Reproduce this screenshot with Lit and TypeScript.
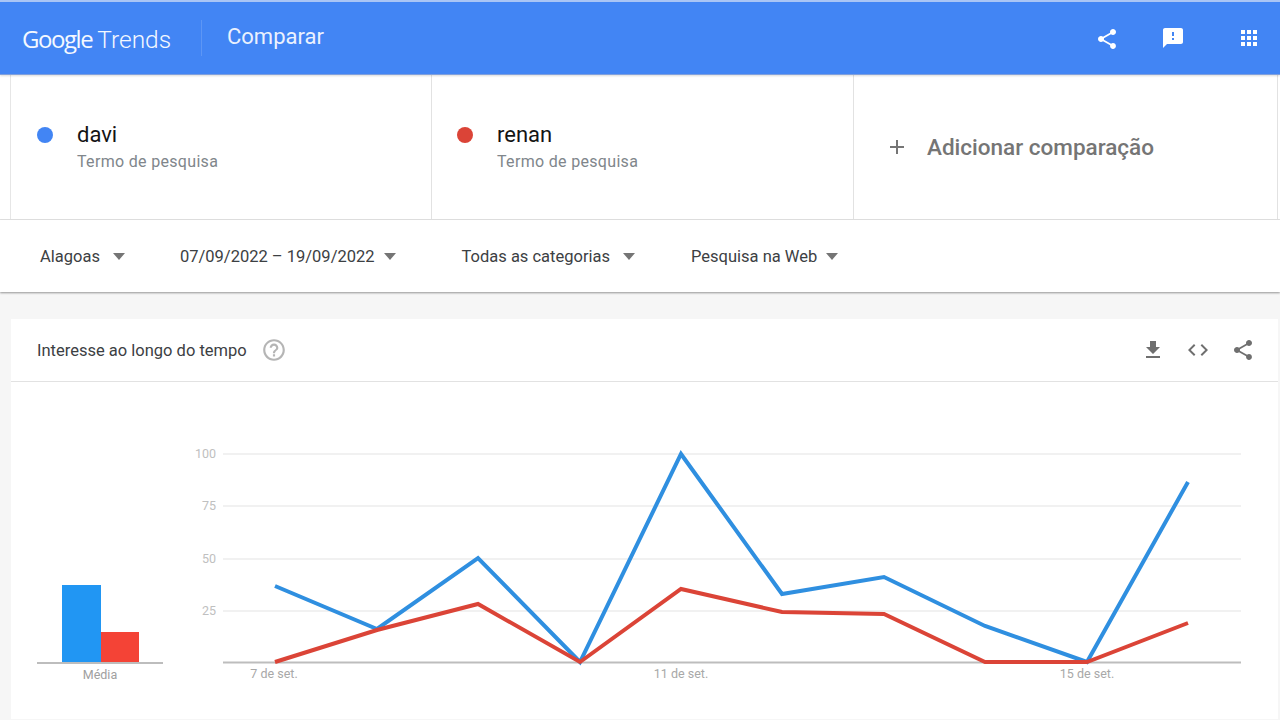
import { LitElement, html, css, svg } from "lit";
import { customElement } from "lit/decorators.js";

const ICONS = {
  share: "M18 16.08c-.76 0-1.44.3-1.96.77L8.91 12.7c.05-.23.09-.46.09-.7s-.04-.47-.09-.7l7.05-4.11c.54.5 1.25.81 2.04.81 1.66 0 3-1.34 3-3s-1.34-3-3-3-3 1.34-3 3c0 .24.04.47.09.7L8.04 9.81C7.5 9.31 6.79 9 6 9c-1.66 0-3 1.34-3 3s1.34 3 3 3c.79 0 1.5-.31 2.04-.81l7.12 4.16c-.05.21-.08.43-.08.65 0 1.61 1.31 2.92 2.92 2.92 1.61 0 2.92-1.31 2.92-2.92s-1.31-2.92-2.92-2.92z",
  feedback: "M20 2H4c-1.1 0-1.99.9-1.99 2L2 22l4-4h14c1.1 0 2-.9 2-2V4c0-1.1-.9-2-2-2zm-7 12h-2v-2h2v2zm0-4h-2V6h2v4z",
  apps: "M4 8h4V4H4v4zm6 12h4v-4h-4v4zm-6 0h4v-4H4v4zm0-6h4v-4H4v4zm6 0h4v-4h-4v4zm6-10v4h4V4h-4zm-6 4h4V4h-4v4zm6 6h4v-4h-4v4zm0 6h4v-4h-4v4z",
  download: "M19 9h-4V3H9v6H5l7 7 7-7zM5 18v2h14v-2H5z",
  code: "M9.4 16.6L4.8 12l4.6-4.6L8 6l-6 6 6 6 1.4-1.4zm5.2 0l4.6-4.6-4.6-4.6L16 6l6 6-6 6-1.4-1.4z",
  help: "M11 18h2v-2h-2v2zm1-16C6.48 2 2 6.48 2 12s4.48 10 10 10 10-4.48 10-10S17.52 2 12 2zm0 18c-4.41 0-8-3.59-8-8s3.59-8 8-8 8 3.59 8 8-3.59 8-8 8zm0-14c-2.21 0-4 1.79-4 4h2c0-1.1.9-2 2-2s2 .9 2 2c0 2-3 1.75-3 5h2c0-2.25 3-2.5 3-5 0-2.21-1.79-4-4-4z",
};
type IconName = keyof typeof ICONS;
const icon = (n: IconName, cls = "") =>
  html`<svg class="icon ${cls}" viewBox="0 0 24 24"><path d=${ICONS[n]}></path></svg>`;

const XS = [275, 377, 478, 580, 681, 782, 884, 985, 1087, 1188];
const BLUE = [587, 630, 559, 663, 455, 595, 578, 627, 663, 483];
const RED = [663, 631, 605, 663, 590, 613, 615, 663, 663, 624];
const points = (ys: number[]) => ys.map((y, i) => `${XS[i]},${y}`).join(" ");
const GRID = [
  { y: 455, label: "100" },
  { y: 507, label: "75" },
  { y: 560, label: "50" },
  { y: 612, label: "25" },
];
const XLABELS = [
  { x: 274, label: "7 de set." },
  { x: 681, label: "11 de set." },
  { x: 1087, label: "15 de set." },
];
const FILTERS = [
  { label: "Alagoas", cls: "f1" },
  { label: "07/09/2022 – 19/09/2022", cls: "f2" },
  { label: "Todas as categorias", cls: "f3" },
  { label: "Pesquisa na Web", cls: "f4" },
];

@customElement("app-root")
export class AppRoot extends LitElement {
  static styles = css`
    :host {
      display: block;
      width: 1280px;
      height: 720px;
      overflow: hidden;
      background: #f6f6f6;
      font-family: Roboto, "Liberation Sans", sans-serif;
      color: #202124;
    }
    .icon { display: block; width: 24px; height: 24px; fill: currentColor; flex: none; }
    header {
      display: flex;
      align-items: center;
      height: 72px;
      border-top: 2px solid #a9c5f5;
      border-bottom: 1px solid #7f9fdc;
      background: #4285f4;
      color: #fff;
      box-shadow: 0 1px 2px rgba(0,0,0,.15);
      position: relative;
    }
    .logo {
      display: flex;
      align-items: baseline;
      width: 180px;
      margin-left: 22px;
      height: 36px;
      padding-top: 2px;
      box-sizing: border-box;
      border-right: 1px solid #5d96f5;
      font-family: "Open Sans", Roboto, sans-serif;
      font-size: 24px;
      line-height: 34px;
      color: #f4f8ff;
    }
    .logo .g { letter-spacing: -1.45px; margin-right: 5px; }
    .logo .t { font-family: Roboto, sans-serif; font-weight: 300; font-size: 24.5px; }
    .title { margin-left: 25px; margin-top: -4px; font-size: 22px; font-weight: 400; color: #eaf1fe; flex: 1; }
    .h-icons { display: flex; align-items: center; margin-right: 19px; margin-top: -1px; }
    .h-icons .icon:nth-child(1) { margin-right: 42px; margin-top: 2px; }
    .h-icons .icon:nth-child(2) { margin-right: 52px; }

    .terms {
      display: flex;
      margin: 0 2px 0 10px;
      height: 144px;
      background: #fff;
      border-left: 1px solid #e6e6e6;
    }
    .terms-wrap { background: #fff; border-bottom: 1px solid #e4e4e4; }
    .term {
      width: 421px;
      box-sizing: border-box;
      border-right: 1px solid #e2e2e2;
      display: flex;
      padding: 47px 0 0 26px;
    }
    .term:nth-child(2) { width: 422px; padding-left: 25px; }
    .term.add { width: 424px; align-items: center; padding: 0 0 0 31px; color: #757575; }
    .dot { width: 16px; height: 16px; border-radius: 50%; margin: 5px 24px 0 0; flex: none; }
    .dot.b { background: #4285f4; }
    .dot.r { background: #db4437; }
    .name { font-size: 22px; line-height: 26px; color: #141414; }
    .sub { font-size: 16px; line-height: 20px; margin-top: 4px; color: #80868b; letter-spacing: .02em; }
    .plus { width: 24px; height: 24px; margin-right: 18px; color: #757575; }
    .add-label { font-size: 22.5px; font-weight: 500; color: #757575; }

    .filters {
      display: flex;
      align-items: center;
      height: 72px;
      background: #fff;
      box-shadow: 0 1px 2px rgba(0,0,0,.4);
      position: relative;
      font-size: 16.5px;
      color: #3c4043;
    }
    .filter { display: flex; align-items: center; }
    .caret {
      width: 0; height: 0;
      border-left: 6.5px solid transparent;
      border-right: 6.5px solid transparent;
      border-top: 7px solid #757575;
    }
    .f1 { margin-left: 40px; gap: 13px; }
    .f2 { margin-left: 55px; gap: 9px; }
    .f3 { margin-left: 66px; gap: 13px; }
    .f4 { margin-left: 56px; gap: 9px; }

    .card {
      margin: 27px 2px 0 11px;
      background: #fff;
      height: 400px;
    }
    .card-head {
      display: flex;
      align-items: center;
      height: 62px;
      border-bottom: 1px solid #e2e2e2;
      padding: 0 23px 0 26px;
      font-size: 16.5px;
      color: #3c4043;
    }
    .help { color: #b5b5b5; margin-left: 14px; width: 26px; height: 26px; }
    .spacer { flex: 1; }
    .actions { display: flex; gap: 21px; color: #6f6f6f; }
    .body { display: flex; height: 337px; }
    .avg {
      width: 126px;
      margin-left: 26px;
      padding-top: 203px;
      box-sizing: border-box;
      flex: none;
    }
    .bars {
      display: flex;
      align-items: flex-end;
      height: 79px;
      padding-left: 25px;
      border-bottom: 2px solid #bdbdbd;
      box-sizing: border-box;
    }
    .bar { width: 38.5px; }
    .bar.b { height: 77px; background: #2196f3; }
    .bar.r { height: 30px; background: #f44336; }
    .avg-label { text-align: center; font-size: 12.5px; color: #a0a0a0; margin-top: 3px; }
    .chart { display: block; width: 1115px; height: 337px; flex: none; }
    .chart text { font-family: Roboto, sans-serif; font-size: 12.5px; fill: #a8a8a8; }
    .chart .yl { fill: #c0c0c0; }
  `;

  render() {
    return html`
      <header>
        <div class="logo"><span class="g">Google</span><span class="t">Trends</span></div>
        <div class="title">Comparar</div>
        <div class="h-icons">${icon("share")}${icon("feedback")}${icon("apps")}</div>
      </header>
      <div class="terms-wrap">
        <div class="terms">
          <div class="term">
            <span class="dot b"></span>
            <div><div class="name">davi</div><div class="sub">Termo de pesquisa</div></div>
          </div>
          <div class="term">
            <span class="dot r"></span>
            <div><div class="name">renan</div><div class="sub">Termo de pesquisa</div></div>
          </div>
          <div class="term add">
            <svg class="icon plus" viewBox="0 0 24 24"><path d="M19 13h-6v6h-2v-6H5v-2h6V5h2v6h6v2z"></path></svg>
            <span class="add-label">Adicionar comparação</span>
          </div>
        </div>
      </div>
      <div class="filters">
        ${FILTERS.map(
          (f) => html`<div class="filter ${f.cls}"><span>${f.label}</span><span class="caret"></span></div>`
        )}
      </div>
      <section class="card">
        <div class="card-head">
          <span>Interesse ao longo do tempo</span>
          ${icon("help", "help")}
          <span class="spacer"></span>
          <div class="actions">${icon("download")}${icon("code")}${icon("share")}</div>
        </div>
        <div class="body">
          <div class="avg">
            <div class="bars"><div class="bar b"></div><div class="bar r"></div></div>
            <div class="avg-label">Média</div>
          </div>
          <svg class="chart" viewBox="163 383 1115 337">
            ${GRID.map(
              (g) => svg`
                <line x1="223" x2="1241" y1=${g.y} y2=${g.y} stroke="#e4e4e4" stroke-width="1.2"></line>
                <text class="yl" x="216" y=${g.y + 4} text-anchor="end">${g.label}</text>`
            )}
            <line x1="223" x2="1241" y1="663.5" y2="663.5" stroke="#bdbdbd" stroke-width="2"></line>
            ${XLABELS.map(
              (l) => svg`<text x=${l.x} y="679" text-anchor="middle">${l.label}</text>`
            )}
            <polyline points=${points(BLUE)} fill="none" stroke="#2f8fe0" stroke-width="4" stroke-linejoin="miter"></polyline>
            <polyline points=${points(RED)} fill="none" stroke="#db4437" stroke-width="4" stroke-linejoin="miter"></polyline>
          </svg>
        </div>
      </section>
    `;
  }
}
